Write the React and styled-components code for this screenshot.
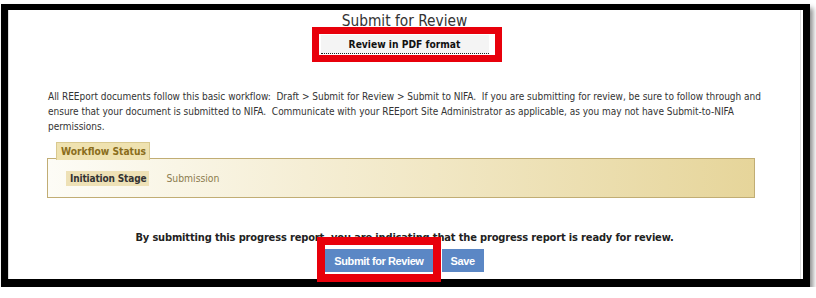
import React from "react";
import styled, { createGlobalStyle } from "styled-components";

const Global = createGlobalStyle`
  html, body { margin: 0; padding: 0; background: #fff; }
  body { font-family: "DejaVu Sans Condensed", "DejaVu Sans", sans-serif; }
`;

const Frame = styled.div`
  box-sizing: border-box;
  margin: 4px 0 0 1px;
  width: 809px;
  height: 283px;
  border: 7px solid #000;
  border-top-width: 6px;
  border-bottom-width: 8px;
  box-shadow: 3px 4px 5px rgba(0, 0, 0, 0.45);
  background: #fff;
`;

const Inner = styled.div`
  box-sizing: border-box;
  height: 100%;
  margin-right: 2px;
  border-left: 1px solid #dcdcdc;
  border-right: 1px solid #dcdcdc;
  display: flex;
  flex-direction: column;
  align-items: center;
  padding-top: 2px;
`;

const Title = styled.h1`
  margin: 0;
  font-size: 15.3px;
  line-height: 18px;
  font-weight: normal;
  color: #333;
`;

const Annotated = styled.div`
  position: relative;
  margin-top: 5px;
`;

const RedBox = styled.div`
  position: absolute;
  border: ${(p) => p.$w}px solid #e8000b;
  top: ${(p) => p.$t}px;
  left: ${(p) => p.$l}px;
  right: ${(p) => p.$r}px;
  bottom: ${(p) => p.$b}px;
  pointer-events: none;
`;

const PdfLink = styled.div`
  width: 168px;
  box-sizing: border-box;
  background: #f4f4f4;
  text-align: center;
  font-size: 10.2px;
  font-weight: bold;
  color: #111;
  line-height: 14px;
  padding: 3px 0 1px;
  border-bottom: 1px dotted #222;
  margin-bottom: 1px;
`;

const Paragraph = styled.p`
  align-self: stretch;
  margin: 34px 30px 0 39px;
  font-size: 10px;
  letter-spacing: -0.015px;
  line-height: 15px;
  color: #333;
`;

const Workflow = styled.div`
  align-self: stretch;
  margin: 8px 45px 0 38px;
  display: flex;
  flex-direction: column;
`;

const Legend = styled.div`
  align-self: flex-start;
  margin-left: 9px;
  margin-bottom: -2px;
  position: relative;
  padding: 1px 3px 0 4px;
  height: 16px;
  line-height: 16px;
  font-size: 10.2px;
  font-weight: bold;
  color: #8a6d1c;
  background: #efe2b0;
  border: 1px solid #d9c98f;
  border-bottom: none;
`;

const StatusBox = styled.div`
  height: 38px;
  border: 1px solid #c1ad74;
  background: linear-gradient(to right, #fdfcf6 0%, #f1e7c4 55%, #e6d59a 100%);
  display: flex;
  align-items: center;
  padding: 0 0 0 18px;
  gap: 13px;
`;

const Stage = styled.span`
  line-height: 15px;
  padding: 0 3px 0 4px;
  font-size: ${(p) => (p.$active ? "10px" : "10.3px")};
  letter-spacing: ${(p) => (p.$active ? "-0.15px" : "0")};
  font-weight: ${(p) => (p.$active ? "bold" : "normal")};
  color: ${(p) => (p.$active ? "#333" : "#8b7b4e")};
  background: ${(p) => (p.$active ? "#eee1b6" : "transparent")};
`;

const Notice = styled.p`
  margin: 32px 0 0;
  font-size: 11px;
  letter-spacing: -0.15px;
  line-height: 15px;
  font-weight: bold;
  color: #222;
`;

const Buttons = styled.div`
  display: flex;
  gap: 9px;
  margin-top: 4px;
`;

const Button = styled.button`
  height: 23px;
  border: none;
  padding: 0 ${(p) => p.$pad}px;
  background: #5b87c5;
  color: #fff;
  font-family: "Liberation Sans", Arial, sans-serif;
  font-size: 11px;
  font-weight: bold;
  letter-spacing: -0.4px;
  cursor: pointer;
`;

export default function App() {
  return (
    <>
      <Global />
      <Frame>
        <Inner>
          <Title>Submit for Review</Title>
          <Annotated>
            <PdfLink>Review in PDF format</PdfLink>
            <RedBox $w={7} $t={-8} $l={-9} $r={-13} $b={-7} />
          </Annotated>
          <Paragraph>
            All REEport documents follow this basic workflow:&nbsp; Draft &gt; Submit for Review &gt; Submit to
            NIFA.&nbsp; If you are submitting for review, be sure to follow through and ensure that your document is
            submitted to NIFA.&nbsp; Communicate with your REEport Site Administrator as applicable, as you may not
            have Submit-to-NIFA permissions.
          </Paragraph>
          <Workflow>
            <Legend>Workflow Status</Legend>
            <StatusBox>
              <Stage $active>Initiation Stage</Stage>
              <Stage>Submission</Stage>
            </StatusBox>
          </Workflow>
          <Notice>By submitting this progress report, you are indicating that the progress report is ready for review.</Notice>
          <Buttons>
            <Annotated as="span" style={{ marginTop: 0 }}>
              <Button $pad={9}>Submit for Review</Button>
              <RedBox $w={8} $t={-12} $l={-8} $r={-8} $b={-10} />
            </Annotated>
            <Button $pad={9}>Save</Button>
          </Buttons>
        </Inner>
      </Frame>
    </>
  );
}
